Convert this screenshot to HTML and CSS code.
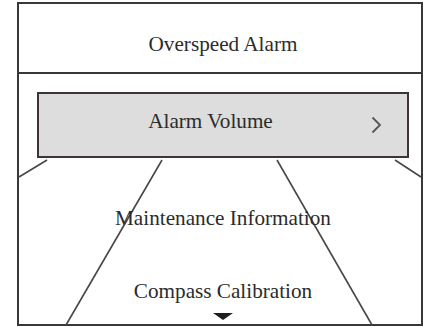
FILE: index.html
```html
<!DOCTYPE html>
<html lang="en">
<head>
<meta charset="utf-8">
<title>Menu</title>
<link rel="stylesheet" href="styles.css">
</head>
<body>
<div class="frame">
  <svg class="perspective" width="402" height="320" viewBox="0 0 402 320" aria-hidden="true">
    <line x1="28" y1="156" x2="0" y2="173"/>
    <line x1="376" y1="156" x2="402" y2="173"/>
    <line x1="143" y1="156" x2="47" y2="321"/>
    <line x1="258" y1="156" x2="353" y2="321"/>
  </svg>
  <div class="header">Overspeed Alarm</div>
  <div class="list">
    <div class="item selected">
      <span class="spacer"></span>
      <span class="label">Alarm Volume</span>
      <svg class="chevron" width="11" height="18" viewBox="0 0 11 18" aria-hidden="true">
        <polyline points="1.5,1.5 9,9 1.5,16.5"/>
      </svg>
    </div>
    <div class="item plain first">Maintenance Information</div>
    <div class="item plain second">Compass Calibration</div>
    <svg class="more" width="20" height="7" viewBox="0 0 20 7" aria-hidden="true">
      <polygon points="0,0 20,0 10,7"/>
    </svg>
  </div>
</div>
</body>
</html>
```
FILE: styles.css
```css
html, body {
  margin: 0;
  padding: 0;
  background: #ffffff;
}

body {
  font-family: "Liberation Serif", "Times New Roman", serif;
  font-size: 21.2px;
  line-height: 24px;
  color: #2b2b2b;
}

.frame {
  position: relative;
  box-sizing: border-box;
  width: 406px;
  height: 324px;
  margin: 2px 0 0 17px;
  border: 2px solid #383838;
  display: flex;
  flex-direction: column;
}

.perspective {
  position: absolute;
  left: 0;
  top: 0;
  z-index: 0;
  overflow: visible;
}

.perspective line {
  stroke: #474747;
  stroke-width: 1.6;
}

.header {
  position: relative;
  z-index: 1;
  height: 70px;
  box-sizing: border-box;
  padding: 28px 12px 0 18px;
  border-bottom: 2px solid #383838;
  text-align: center;
  background: #ffffff;
}

.list {
  position: relative;
  z-index: 1;
  flex: 1;
  display: flex;
  flex-direction: column;
  align-items: stretch;
  padding: 18px 12px 0 18px;
}

.item.selected {
  box-sizing: border-box;
  height: 66px;
  background: #dcdddc;
  border: 2px solid #3d3535;
  display: grid;
  grid-template-columns: 1fr auto 1fr;
  align-items: center;
  padding: 0 25px 0 0;
}

.item.selected .label {
  margin-top: -8px;
}

.chevron {
  justify-self: end;
}

.chevron polyline {
  fill: none;
  stroke: #555555;
  stroke-width: 1.8;
}

.item.plain {
  text-align: center;
}

.item.first {
  margin-top: 48px;
}

.item.second {
  margin-top: 49px;
}

.more {
  align-self: center;
  margin-top: 10px;
}

.more polygon {
  fill: #1e1e1e;
}
```
